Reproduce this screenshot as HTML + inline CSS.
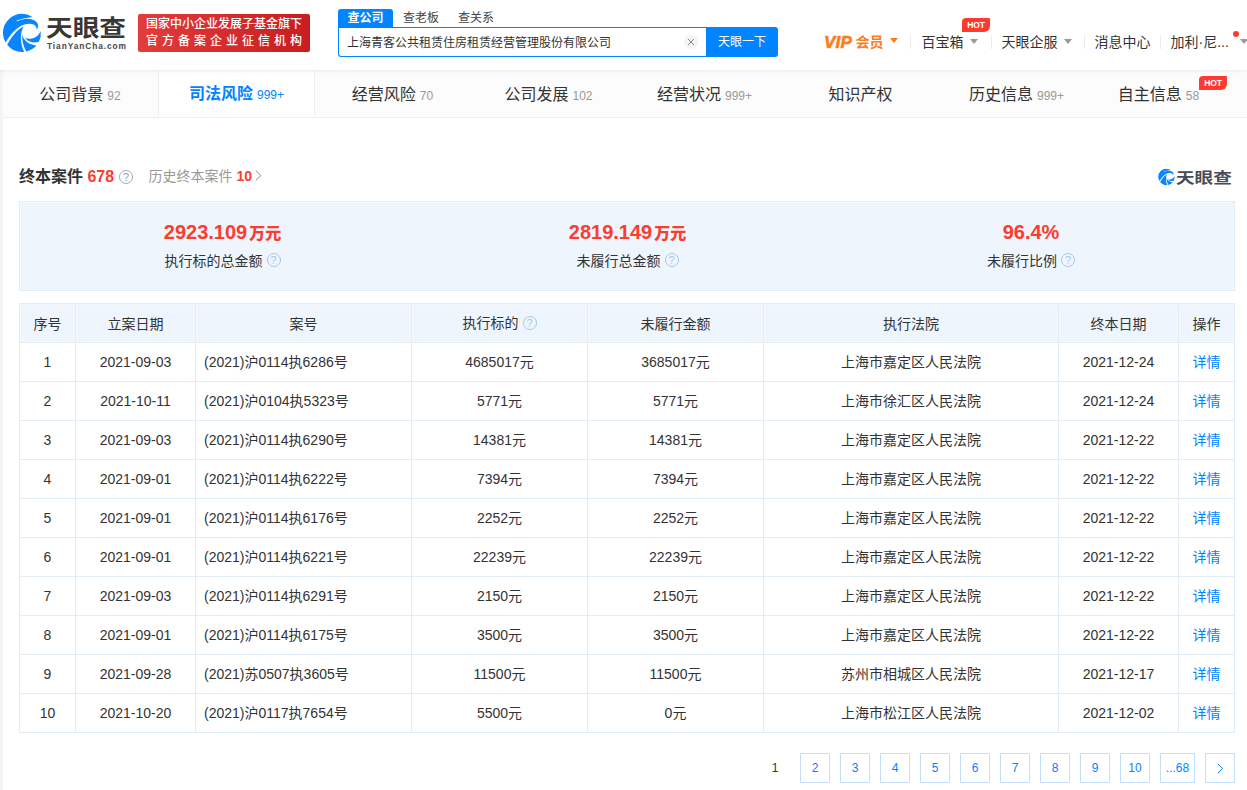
<!DOCTYPE html>
<html lang="zh-CN">
<head>
<meta charset="utf-8">
<title>天眼查</title>
<style>
*{box-sizing:border-box;margin:0;padding:0}
html,body{width:1247px;height:790px;overflow:hidden;background:#fff}
body{position:relative;font-family:"Liberation Sans","Noto Sans CJK SC",sans-serif;font-size:14px;color:#333;line-height:1}
.abs{position:absolute;white-space:nowrap}
/* header */
#hdr{position:absolute;left:0;top:0;width:1247px;height:70px;background:#fff;z-index:5;box-shadow:0 1px 3px rgba(0,0,0,.08)}
#logo{position:absolute;left:0;top:10px;width:46px;height:46px}
#logot{left:46px;top:14px;font-size:23px;font-weight:700;color:#3a3636;line-height:28px;transform:scaleX(1.16);transform-origin:0 0}
#logos{left:47px;top:41px;font-size:8.4px;font-weight:700;color:#4a4646;line-height:10px;letter-spacing:.9px}
#badge{position:absolute;left:138px;top:14px;width:172px;height:38px;border-radius:2px;background:linear-gradient(90deg,#e23c3c,#c91d1f);color:#fff;font-weight:500;font-size:12px}
#badge div{position:absolute;left:8px;white-space:nowrap;line-height:14px}
#stab{position:absolute;left:338px;top:9px;height:18px;width:200px;font-size:12px;line-height:18px}
#stab span{position:absolute;top:0;white-space:nowrap;color:#444}
#stab .on{left:0;width:55px;text-align:center;background:#0084ff;color:#fff;font-weight:700;border-radius:3px 3px 0 0}
#sin{position:absolute;left:338px;top:27px;width:369px;height:30px;border:1px solid #0084ff;border-right:none;border-radius:0 0 0 3px;font-size:12px;line-height:30px;padding-left:8px;color:#333;white-space:nowrap}
#sclr{position:absolute;left:684px;top:35px;width:14px;height:14px}
#sbtn{position:absolute;left:706px;top:27px;width:72px;height:30px;background:#0084ff;color:#fff;font-size:12px;line-height:30px;text-align:center;border-radius:0 3px 3px 0}
.nav{top:34px;margin-left:.5px;font-size:14px;line-height:16px;color:#333}
.nsep{position:absolute;top:35px;width:1px;height:14px;background:#ebebeb}
.car{position:absolute;width:0;height:0;border-left:4.3px solid transparent;border-right:4.3px solid transparent;border-top:5.2px solid #999;margin-top:-.8px}
.hot{position:absolute;background:#ff3a2f;color:#fff;font-size:8.5px;font-weight:700;line-height:14px;height:14px;width:28px;text-align:center;border-radius:4px 1px 6px 0;letter-spacing:-.2px}
#slogot{left:1176px;top:168px;font-size:15px;font-weight:700;color:#484b54;line-height:20px;transform:scaleX(1.24);transform-origin:0 0}
/* tabs */
#side{position:absolute;left:0;top:70px;width:3px;height:720px;background:#f4f4f4}
#tabs{position:absolute;left:2px;top:70px;width:1248px;height:48px;background:#fcfcfc;border-bottom:1px solid #efefef}
.tab{position:absolute;top:0;width:156px;height:47px;text-align:center;font-size:16px;line-height:49px;border-left:1px solid transparent;white-space:nowrap;color:#333}
.tab i{font-style:normal;font-size:12px;color:#999;margin-left:4px}
.tab.on{background:#fff;color:#0084ff;font-weight:700;border-left:1px solid #efefef;border-right:1px solid #efefef;width:157px;z-index:2;line-height:48px}
.tab.on i{color:#0084ff;font-weight:400}
/* section */
.q{display:inline-block;width:14px;height:14px;border:1px solid #aaa;border-radius:50%;font-size:11px;line-height:12px;text-align:center;color:#999;vertical-align:middle;font-family:"Liberation Sans",sans-serif}
#sum{position:absolute;left:19px;top:201px;width:1216px;height:90px;background:#eef5fd;border:1px solid #e2ecf5;box-shadow:inset 0 0 0 1px #f3f8fd}
.sc{position:absolute;top:0;height:90px;text-align:center}
.sv{position:absolute;left:0;right:0;top:19px;font-size:20px;font-weight:700;color:#fd3c30;line-height:22px;white-space:nowrap}
.sv b{font-size:16px;margin-left:2px}
.sl{position:absolute;left:0;right:0;top:50px;font-size:14px;line-height:18px;color:#333;white-space:nowrap}
.sl .q{border-color:#a6c8ea;color:#a6c8ea;margin-left:4px;position:relative;top:-2px}
/* table */
table{position:absolute;left:19px;top:303px;width:1215px;border-collapse:collapse;table-layout:fixed;font-size:14px}
td,th{border:1px solid #e1ecf5;height:39px;text-align:center;font-weight:400;color:#333;padding:0;white-space:nowrap}
th{background:#eef5fd;padding-top:2px;box-shadow:inset 0 0 0 1px #f3f8fd}
td.l{text-align:left;padding-left:8px}
td a{color:#0084ff;text-decoration:none}
th .q{border-color:#a6c8ea;color:#a6c8ea;margin-left:4px;position:relative;top:-2px}
/* pager */
.pg{position:absolute;top:753px;width:30px;height:30px;border:1px solid #c4e0fc;color:#0084ff;font-size:12px;line-height:28px;text-align:center;white-space:nowrap}
</style>
</head>
<body>
<div id="hdr">
  <svg id="logo" viewBox="0 0 790 790" fill="#0a84ff"><path d="M558 122 A328 328 0 0 0 378 65 A328 328 0 0 0 50 393 A328 328 0 0 0 97 560 C180 410 290 290 420 248 C500 225 600 235 622 290 Q632 315 630 342 Q668 290 650 240 C620 170 500 140 420 153 Q350 165 290 194 L284 181 Q420 135 558 122Z"/><path d="M123 597 C200 450 300 330 408 283 C350 380 330 540 415 719 A328 328 0 0 1 123 597Z"/><path d="M385 400 C380 500 470 590 624 610 A328 328 0 0 1 452 713 C390 600 370 500 385 400Z"/><path d="M430 482 C540 520 650 470 700 360 A328 328 0 0 1 668 546 C590 580 480 550 430 482Z"/></svg>
  <div class="abs" id="logot">天眼查</div>
  <div class="abs" id="logos">TianYanCha.com</div>
  <div id="badge"><div style="top:3px">国家中小企业发展子基金旗下</div><div style="top:20px;letter-spacing:4px">官方备案企业征信机构</div></div>
  <div id="stab"><span class="on">查公司</span><span style="left:65px">查老板</span><span style="left:120px">查关系</span></div>
  <div id="sin">上海青客公共租赁住房租赁经营管理股份有限公司</div>
  <svg id="sclr" viewBox="0 0 14 14"><circle cx="7" cy="7" r="7" fill="#f4f4f4"/><path d="M4 4l6 6M10 4l-6 6" stroke="#888" stroke-width="1" fill="none"/></svg>
  <div id="sbtn">天眼一下</div>
  <div class="abs nav" style="left:824px;color:#ff7c18;font-weight:700;font-size:14px;top:32px;line-height:20px"><em style="font-size:17px;letter-spacing:.2px;-webkit-text-stroke:.6px #ff7c18;position:relative;top:1px;left:-.5px">VIP</em><span style="margin-left:3px">会员</span></div>
  <div class="car" style="left:889.5px;top:39px;border-top-color:#ff7c18;border-left-width:4.5px;border-right-width:4.5px;border-top-width:5.5px"></div>
  <div class="nsep" style="left:910px"></div>
  <div class="abs nav" style="left:921px">百宝箱</div>
  <div class="car" style="left:970px;top:40px"></div>
  <div class="hot" style="left:962px;top:18px">HOT</div>
  <div class="nsep" style="left:991px"></div>
  <div class="abs nav" style="left:1001px">天眼企服</div>
  <div class="car" style="left:1064px;top:40px"></div>
  <div class="nsep" style="left:1084px"></div>
  <div class="abs nav" style="left:1094px">消息中心</div>
  <div class="nsep" style="left:1160px"></div>
  <div class="abs nav" style="left:1170px">加利·尼...</div>
  <div class="abs" style="left:1233px;top:31px;width:6px;height:6px;border-radius:50%;background:#fe3b30"></div>
  <div class="car" style="left:1240px;top:40px"></div>
</div>
<div id="tabs">
  <div class="tab" style="left:0;border-left:none">公司背景<i>92</i></div>
  <div class="tab on" style="left:156px">司法风险<i>999+</i></div>
  <div class="tab" style="left:312px">经营风险<i>70</i></div>
  <div class="tab" style="left:468px">公司发展<i>102</i></div>
  <div class="tab" style="left:624px">经营状况<i>999+</i></div>
  <div class="tab" style="left:780px">知识产权</div>
  <div class="tab" style="left:936px">历史信息<i>999+</i></div>
  <div class="tab" style="left:1092px">自主信息<i>58</i><span style="display:inline-block;width:28px"></span></div>
</div>
<div id="side"></div>
<div class="hot" style="left:1199px;top:76px">HOT</div>

<div class="abs" style="left:19px;top:168px;font-size:16px;line-height:18px;font-weight:700;color:#333">终本案件 <span style="color:#fd3c30">678</span></div>
<div class="abs" style="left:119px;top:169px"><span class="q">?</span></div>
<div class="abs" style="left:148.5px;top:168px;font-size:14px;line-height:16px;color:#999">历史终本案件 <b style="color:#fd3c30">10</b></div>
<svg class="abs" style="left:255px;top:170px;width:7px;height:11px" viewBox="0 0 7 11"><path d="M.7 .4L5.9 5.5L.7 10.6" fill="none" stroke="#8a8a8a" stroke-width="1"/></svg>

<svg class="abs" style="left:1157.4px;top:167px;width:19.9px;height:19.9px" viewBox="0 0 790 790" fill="#0a84ff"><path d="M558 122 A328 328 0 0 0 378 65 A328 328 0 0 0 50 393 A328 328 0 0 0 97 560 C180 410 290 290 420 248 C500 225 600 235 622 290 Q632 315 630 342 Q668 290 650 240 C620 170 500 140 420 153 Q350 165 290 194 L284 181 Q420 135 558 122Z"/><path d="M123 597 C200 450 300 330 408 283 C350 380 330 540 415 719 A328 328 0 0 1 123 597Z"/><path d="M385 400 C380 500 470 590 624 610 A328 328 0 0 1 452 713 C390 600 370 500 385 400Z"/><path d="M430 482 C540 520 650 470 700 360 A328 328 0 0 1 668 546 C590 580 480 550 430 482Z"/></svg>
<div class="abs" id="slogot">天眼查</div>
<div id="sum">
  <div class="sc" style="left:0;width:405px"><div class="sv">2923.109<b>万元</b></div><div class="sl">执行标的总金额<span class="q">?</span></div></div>
  <div class="sc" style="left:405px;width:405px"><div class="sv">2819.149<b>万元</b></div><div class="sl">未履行总金额<span class="q">?</span></div></div>
  <div class="sc" style="left:808.5px;width:405px"><div class="sv">96.4%</div><div class="sl">未履行比例<span class="q">?</span></div></div>
</div>

<table>
<colgroup><col style="width:56px"><col style="width:120px"><col style="width:216px"><col style="width:176px"><col style="width:176px"><col style="width:295px"><col style="width:120px"><col style="width:56px"></colgroup>
<tr><th>序号</th><th>立案日期</th><th>案号</th><th>执行标的<span class="q">?</span></th><th>未履行金额</th><th>执行法院</th><th>终本日期</th><th>操作</th></tr>
<tr><td>1</td><td>2021-09-03</td><td class="l">(2021)沪0114执6286号</td><td>4685017元</td><td>3685017元</td><td>上海市嘉定区人民法院</td><td>2021-12-24</td><td><a>详情</a></td></tr>
<tr><td>2</td><td>2021-10-11</td><td class="l">(2021)沪0104执5323号</td><td>5771元</td><td>5771元</td><td>上海市徐汇区人民法院</td><td>2021-12-24</td><td><a>详情</a></td></tr>
<tr><td>3</td><td>2021-09-03</td><td class="l">(2021)沪0114执6290号</td><td>14381元</td><td>14381元</td><td>上海市嘉定区人民法院</td><td>2021-12-22</td><td><a>详情</a></td></tr>
<tr><td>4</td><td>2021-09-01</td><td class="l">(2021)沪0114执6222号</td><td>7394元</td><td>7394元</td><td>上海市嘉定区人民法院</td><td>2021-12-22</td><td><a>详情</a></td></tr>
<tr><td>5</td><td>2021-09-01</td><td class="l">(2021)沪0114执6176号</td><td>2252元</td><td>2252元</td><td>上海市嘉定区人民法院</td><td>2021-12-22</td><td><a>详情</a></td></tr>
<tr><td>6</td><td>2021-09-01</td><td class="l">(2021)沪0114执6221号</td><td>22239元</td><td>22239元</td><td>上海市嘉定区人民法院</td><td>2021-12-22</td><td><a>详情</a></td></tr>
<tr><td>7</td><td>2021-09-03</td><td class="l">(2021)沪0114执6291号</td><td>2150元</td><td>2150元</td><td>上海市嘉定区人民法院</td><td>2021-12-22</td><td><a>详情</a></td></tr>
<tr><td>8</td><td>2021-09-01</td><td class="l">(2021)沪0114执6175号</td><td>3500元</td><td>3500元</td><td>上海市嘉定区人民法院</td><td>2021-12-22</td><td><a>详情</a></td></tr>
<tr><td>9</td><td>2021-09-28</td><td class="l">(2021)苏0507执3605号</td><td>11500元</td><td>11500元</td><td>苏州市相城区人民法院</td><td>2021-12-17</td><td><a>详情</a></td></tr>
<tr><td>10</td><td>2021-10-20</td><td class="l">(2021)沪0117执7654号</td><td>5500元</td><td>0元</td><td>上海市松江区人民法院</td><td>2021-12-02</td><td><a>详情</a></td></tr>
</table>

<div class="pg" style="left:760px;border-color:transparent;color:#333">1</div>
<div class="pg" style="left:800px">2</div>
<div class="pg" style="left:840px">3</div>
<div class="pg" style="left:880px">4</div>
<div class="pg" style="left:920px">5</div>
<div class="pg" style="left:960px">6</div>
<div class="pg" style="left:1000px">7</div>
<div class="pg" style="left:1040px">8</div>
<div class="pg" style="left:1080px">9</div>
<div class="pg" style="left:1120px">10</div>
<div class="pg" style="left:1160px;width:35px">...68</div>
<div class="pg" style="left:1205px"><svg style="position:absolute;left:10.5px;top:8.5px;width:7px;height:11px" viewBox="0 0 7 11"><path d="M.9 .9L5.7 5.5L.9 10.1" fill="none" stroke="#0084ff" stroke-width="1"/></svg></div>
</body>
</html>
